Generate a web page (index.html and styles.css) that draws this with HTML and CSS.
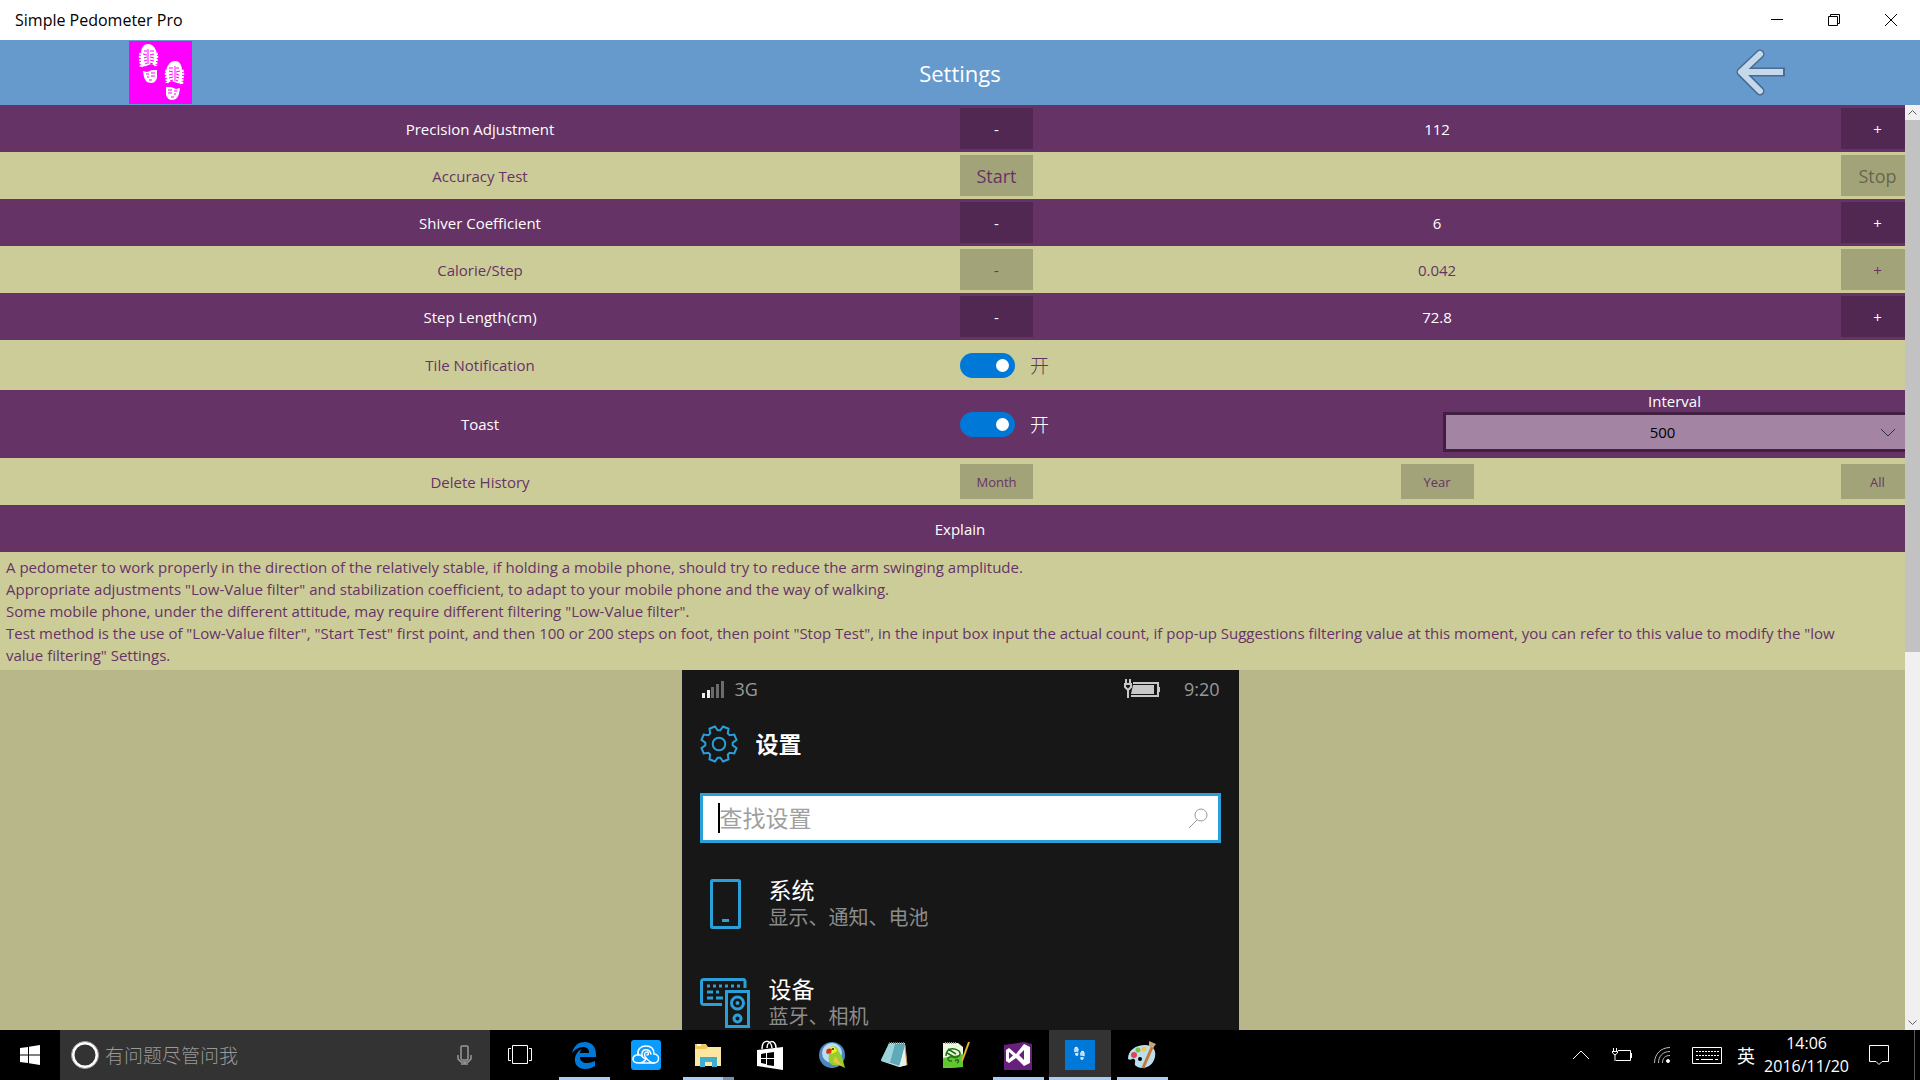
FILE: index.html
```html
<!DOCTYPE html>
<html lang="en">
  <head>
    <meta charset="UTF-8" />
    <meta name="viewport" content="width=device-width, initial-scale=1.0" />
    <title>Simple Pedometer Pro</title>
    <link rel="stylesheet" href="styles.css">
  </head>
  <body>
    <!-- shared footprint shape -->
    <svg class="defs" aria-hidden="true">
      <symbol id="steps" viewBox="0 0 63 63">
        <g id="foot">
          <path d="M12 13 C12 6 15 3 19 3 C24 3 27 7 28 14 C28 19 26 22 27 25 L22 23 L17 25 L12 26 C13 21 11 18 12 13Z" fill="currentColor" />
          <path d="M12 12 C10 17 13 21 12 26 M27 12 C29 17 26 21 27 25" fill="none" stroke="currentColor" stroke-width="3" stroke-dasharray="2 1" />
          <path class="tread" d="M15 10 H18 M21 10 H25 M14 13 L18 14 M21 14 L25 13 M15 17 L18 16 M21 16 L25 17 M15 20 L18 19 M21 19 L25 20 M16 23 L18 22 M21 22 L24 23 M19 8 V23" fill="none" />
          <path d="M14 30 L18 31 L23 29 L28 29 L28 37 C27 40 25 42 22 42 C18 42 16 39 15 36Z" fill="currentColor" />
          <path class="tread" d="M17 33 H20 M22 32 H26 M18 36 H20 M22 35 H26 M20 39 H23" fill="none" />
        </g>
        <use href="#foot" transform="translate(65 17) scale(-1 1)" />
      </symbol>
    </svg>

    <div class="titlebar">
      <span class="titlebar-text">Simple Pedometer Pro</span>
      <div class="window-buttons">
        <button aria-label="Minimize"><svg width="12" height="12" viewBox="0 0 12 12"><path d="M0 5.5H12" /></svg></button>
        <button aria-label="Restore"><svg width="12" height="12" viewBox="0 0 12 12"><path d="M.5 2.5H9.5V11.5H.5Z M2.5 2.5V.5H11.5V9.5H9.5" /></svg></button>
        <button aria-label="Close"><svg width="12" height="12" viewBox="0 0 12 12"><path d="M0 0L12 12M12 0L0 12" /></svg></button>
      </div>
    </div>

    <header>
      <svg class="logo" viewBox="0 0 63 63"><use href="#steps" /></svg>
      <h1>Settings</h1>
      <button class="back" aria-label="Back">
        <svg width="52" height="48" viewBox="0 0 52 48">
          <g fill="none" stroke-linejoin="round">
            <path d="M26 5L7 23L26 42" stroke="#486b90" stroke-width="9" stroke-linecap="round" />
            <path d="M8 23H51" stroke="#486b90" stroke-width="9" />
            <path d="M26 5L7 23L26 42" stroke="#c6d8eb" stroke-width="6" stroke-linecap="round" />
            <path d="M8 23H49" stroke="#c6d8eb" stroke-width="6" />
          </g>
        </svg>
      </button>
    </header>

    <main>
      <section class="row dark">
        <span class="row-label">Precision Adjustment</span>
        <div class="controls">
          <button aria-label="Decrease precision">-</button>
          <output>112</output>
          <button aria-label="Increase precision">+</button>
        </div>
      </section>
      <section class="row">
        <span class="row-label">Accuracy Test</span>
        <div class="controls">
          <button class="large">Start</button>
          <button class="large" disabled>Stop</button>
        </div>
      </section>
      <section class="row dark">
        <span class="row-label">Shiver Coefficient</span>
        <div class="controls">
          <button aria-label="Decrease shiver coefficient">-</button>
          <output>6</output>
          <button aria-label="Increase shiver coefficient">+</button>
        </div>
      </section>
      <section class="row">
        <span class="row-label">Calorie/Step</span>
        <div class="controls">
          <button aria-label="Decrease calorie per step">-</button>
          <output>0.042</output>
          <button aria-label="Increase calorie per step">+</button>
        </div>
      </section>
      <section class="row dark">
        <span class="row-label">Step Length(cm)</span>
        <div class="controls">
          <button aria-label="Decrease step length">-</button>
          <output>72.8</output>
          <button aria-label="Increase step length">+</button>
        </div>
      </section>
      <section class="row tile">
        <label class="row-label" for="tile">Tile Notification</label>
        <div class="controls">
          <div class="toggle"><input type="checkbox" id="tile" checked /><span>开</span></div>
        </div>
      </section>
      <section class="row dark toast">
        <label class="row-label" for="toast">Toast</label>
        <div class="controls">
          <div class="toggle"><input type="checkbox" id="toast" checked /><span>开</span></div>
          <div class="interval">
            <label for="interval">Interval</label>
            <div class="select-box">
              <select id="interval"><option>500</option></select>
              <svg width="16" height="9" viewBox="0 0 16 9"><path d="M1 1L8 8L15 1" /></svg>
            </div>
          </div>
        </div>
      </section>
      <section class="row history">
        <span class="row-label">Delete History</span>
        <div class="controls">
          <button>Month</button>
          <button>Year</button>
          <button>All</button>
        </div>
      </section>
      <h2 class="row dark">Explain</h2>
      <div class="explain">
        <p>A pedometer to work properly in the direction of the relatively stable, if holding a mobile phone, should try to reduce the arm swinging amplitude.</p>
        <p>Appropriate adjustments "Low-Value filter" and stabilization coefficient, to adapt to your mobile phone and the way of walking.</p>
        <p>Some mobile phone, under the different attitude, may require different filtering "Low-Value filter".</p>
        <p>Test method is the use of "Low-Value filter", "Start Test" first point, and then 100 or 200 steps on foot, then point "Stop Test", in the input box input the actual count, if pop-up Suggestions filtering value at this moment, you can refer to this value to modify the "low value filtering" Settings.</p>
      </div>

      <div class="guide">
        <div class="phone">
          <div class="phone-status">
            <svg width="22" height="17" viewBox="0 0 22 17">
              <path d="M0 12h3v5H0z M5 9h3v8H5z" fill="#eee" />
              <path d="M9 6h3v11H9z M14 3h3v14h-3z M19 0h3v17h-3z" fill="#6b6b6b" />
            </svg>
            <span class="network">3G</span>
            <svg width="36" height="20" viewBox="0 0 36 20">
              <path d="M9 4H34V17H7" fill="none" stroke="#c8c8c8" stroke-width="2" />
              <path d="M9 6H30V15H7Z M34 8h2v5h-2z" fill="#c8c8c8" />
              <path d="M2 0V4M6 0V4M0 5H8M1 5V8L4 11L7 8V5M4 11V19" fill="none" stroke="#c8c8c8" stroke-width="2" />
            </svg>
            <span class="phone-time">9:20</span>
          </div>
          <div class="phone-title">
            <svg width="38" height="38" viewBox="-19 -19 38 38">
              <path d="M-4.1 -17.5L-9.5 -15.3L-8.8 -10.6L-10.6 -8.8L-15.3 -9.5L-17.5 -4.1L-13.7 -1.3V1.3L-17.5 4.1L-15.3 9.5L-10.6 8.8L-8.8 10.6L-9.5 15.3L-4.1 17.5L-1.3 13.7H1.3L4.1 17.5L9.5 15.3L8.8 10.6L10.6 8.8L15.3 9.5L17.5 4.1L13.7 1.3V-1.3L17.5 -4.1L15.3 -9.5L10.6 -8.8L8.8 -10.6L9.5 -15.3L4.1 -17.5L1.3 -13.7H-1.3Z" />
              <circle r="6.3" />
            </svg>
            <strong>设置</strong>
          </div>
          <div class="phone-search">
            <span class="caret"></span>
            <input type="text" aria-label="查找设置" placeholder="查找设置" />
            <svg width="20" height="21" viewBox="0 0 20 21"><circle cx="13" cy="7" r="6" /><path d="M9 12L1 20" /></svg>
          </div>
          <div class="phone-item">
            <svg width="50" height="50" viewBox="0 0 50 50">
              <rect x="11.5" y="1.5" width="28" height="47" rx="1" fill="none" stroke="#2a9fd8" stroke-width="3" />
              <path d="M22 40h7v3h-7z" fill="#2a9fd8" />
            </svg>
            <div>
              <p class="item-name">系统</p>
              <p class="item-text">显示、通知、电池</p>
            </div>
          </div>
          <div class="phone-item">
            <svg width="50" height="50" viewBox="0 0 50 50" fill="none" stroke="#2a9fd8" stroke-width="3">
              <path d="M45 10V3C45 2 44 1.5 44 1.5H4C2 1.5 1.5 2 1.5 4V24C1.5 26 2 26.5 4 26.5H22" />
              <path d="M7 8H43" stroke-dasharray="3 3" />
              <path d="M7 14H13M16 14H19M7 20H13M16 20H23" />
              <rect x="26.5" y="13.5" width="22" height="35" />
              <circle cx="37.5" cy="25" r="6" />
              <circle cx="37.5" cy="25" r="1" stroke-width="2" />
              <circle cx="37.5" cy="40.5" r="3.5" />
            </svg>
            <div>
              <p class="item-name">设备</p>
              <p class="item-text">蓝牙、相机</p>
            </div>
          </div>
        </div>
      </div>

      <div class="scrollbar">
        <svg width="15" height="15" viewBox="0 0 15 15"><path d="M3.5 9.5L7.5 5.5L11.5 9.5" /></svg>
        <div class="thumb"></div>
        <svg width="15" height="15" viewBox="0 0 15 15"><path d="M3.5 5.5L7.5 9.5L11.5 5.5" /></svg>
      </div>
    </main>

    <footer class="taskbar">
      <button class="start" aria-label="Start">
        <svg width="20" height="20" viewBox="0 0 20 20" fill="#fff"><path d="M0 3L8 2V9.5H0Z M9 1.8L20 0V9.5H9Z M0 10.5H8V18L0 17Z M9 10.5H20V20L9 18.2Z" /></svg>
      </button>
      <div class="cortana">
        <svg width="28" height="28" viewBox="0 0 28 28"><circle cx="14" cy="14" r="12" fill="none" stroke="#fff" stroke-width="3" /><circle cx="14" cy="14" r="13.5" fill="none" stroke="#999" /></svg>
        <input type="text" aria-label="有问题尽管问我" placeholder="有问题尽管问我" />
        <svg width="15" height="20" viewBox="0 0 15 20" fill="none" stroke="#999" stroke-width="1.5"><rect x="4" y="1" width="7" height="14" rx="1" /><path d="M1 10V14L4 17H11L14 14V10M7.5 17V19M4 19H11" /></svg>
      </div>
      <button class="taskview" aria-label="Task view">
        <svg width="24" height="20" viewBox="0 0 24 20" fill="none" stroke="#fff"><path d="M4.5 .5H19.5V18.5H4.5Z M3 3.5H.5V15.5H3 M21 3.5H23.5V15.5H21" /></svg>
      </button>
      <nav class="apps">
        <button class="open" aria-label="Edge">
          <svg width="26" height="28" viewBox="0 0 26 28"><path d="M1 12C3 4 8 1 14 1C21 1 25 6 25 13V16H9C9 20 12 22 16 22C19 22 21 21 24 20V25C21 27 18 28 14 28C7 28 3 23 4 17C5 12 8 9 11 8C9 10 9 11 9 12H18C18 8 16 6 12 6C8 6 4 8 1 12Z" fill="#0078d7" /></svg>
        </button>
        <button aria-label="Cloud">
          <svg width="30" height="30" viewBox="0 0 30 30"><rect width="30" height="30" rx="3" fill="#0a9bff" /><g fill="none" stroke="#fff" stroke-width="1.5" stroke-linecap="round"><path d="M7 15C6 9 10 6 15 6C20 6 23 9 23 14C29 14 29 23 23 23C19 23 17 20 15 18C12 15 14 12 16 12C18 12 18 15 16 15" /><path d="M20 14C19 9 12 8 11 13C10 17 13 19 15 18" /><path d="M11 16C6 13 2 16 2 19C2 22 5 23 8 23H23M15 19C13 22 11 23 8 23" /></g></svg>
        </button>
        <button class="open multi" aria-label="File Explorer">
          <svg width="28" height="28" viewBox="0 0 28 28"><path d="M1 3H12L14 6H27V25H1Z" fill="#f1c65c" /><path d="M1 8H12L14 6H27V25H1Z" fill="#fde7a0" /><path d="M3 4H7" stroke="#fff" stroke-width="2" /><path d="M6 26V16H23V26H18V21H11V26Z" fill="#3daed1" /></svg>
        </button>
        <button aria-label="Store">
          <svg width="26" height="30" viewBox="0 0 26 30"><path d="M5 9C5 -1 14 -1 15 8M10 8C10 0 19 -1 19 8" fill="none" stroke="#fff" stroke-width="1.5" /><path d="M0 10L26 7V30L0 26Z" fill="#fff" /><path d="M4 14L9 13V18H4Z M10 13L17 12V18H10Z M4 19H9V24L4 23Z M10 19H17V26L10 25Z" fill="#000" /></svg>
        </button>
        <button aria-label="Parrot">
          <svg width="28" height="28" viewBox="0 0 28 28"><circle cx="14" cy="14" r="13" fill="#4c86bf" /><circle cx="14" cy="12" r="10" fill="#b9ddf1" /><path d="M10 9C12 4 19 4 20 9L24 16L27 27L21 24C14 26 9 22 11 14Z" fill="#91cf2b" /><path d="M10 8C13 4 18 5 19 10L14 13Z" fill="#f3ee35" /><path d="M14 8C9 6 7 10 9 13L13 12Z" fill="#e42920" /><path d="M17 15L24 25L15 21Z" fill="#f0c040" /><circle cx="15" cy="8" r="1" fill="#222" /></svg>
        </button>
        <button aria-label="Notepad">
          <svg width="28" height="28" viewBox="0 0 28 28"><path d="M9 2H25L27 24L19 26L1 20Z" fill="#cde4e7" /><path d="M9 3L25 3L20 25L1 19Z" fill="#60a9b6" /><path d="M9 3L15 3L10 22L1 19Z" fill="#9bd4da" /><path d="M25 5L27 24L19 26Z" fill="#e8f1ee" /><path d="M9 2H25" stroke="#777" stroke-width="2" stroke-dasharray="1 1" /><path d="M25 4L27 24" stroke="#b88a42" /></svg>
        </button>
        <button aria-label="Text editor">
          <svg width="28" height="28" viewBox="0 0 28 28"><path d="M1 2H16L21 6V26L1 27Z" fill="#edf7de" /><path d="M1 17L21 13V26L1 27Z" fill="#60c631" /><path d="M4 15C4 7 12 6 17 10C20 14 16 17 11 16C4 15 5 20 10 20M5 12L14 17M6 8L14 13M13 20C16 17 18 20 15 22" fill="none" stroke="#246d18" stroke-width="1.5" /><path d="M27 1L20 20" stroke="#e8b331" stroke-width="2" /><path d="M3 2H14" stroke="#999" stroke-dasharray="1 1" stroke-width="2" /></svg>
        </button>
        <button class="open" aria-label="Visual Studio">
          <svg width="28" height="30" viewBox="0 0 28 30"><path d="M0 5L20 2L28 4V30H0Z" fill="#68217a" /><path d="M2 10L5 8L12 14L20 4L26 7V23L20 26L12 18L5 23L2 21Z" fill="#fff" /><path d="M5 12V19L9 15.5Z M20 10V20L15 15Z" fill="#68217a" /></svg>
        </button>
        <button class="open active" aria-label="Simple Pedometer Pro">
          <svg class="app-tile" width="30" height="30" viewBox="-32 -20 126 126"><use href="#steps" width="63" height="63" transform="translate(-4 5)" /></svg>
        </button>
        <button class="open" aria-label="Paint">
          <svg width="30" height="28" viewBox="0 0 30 28"><path d="M1 18C1 9 9 4 18 4C28 4 30 12 27 19C24 27 14 29 9 25C6 23 10 20 7 18C5 17 4 20 1 18Z" fill="#bcdff0" /><circle cx="7" cy="14" r="3" fill="#dc4654" /><circle cx="11" cy="9" r="2.5" fill="#7ac143" /><circle cx="17" cy="8" r="2.5" fill="#efc845" /><circle cx="13" cy="18" r="2" fill="#000" /><path d="M26 4L16 27" stroke="#c47a38" stroke-width="3" /><path d="M22 0L29 3L26 7L22 5Z" fill="#c9a574" /></svg>
        </button>
      </nav>
      <div class="tray">
        <svg width="18" height="10" viewBox="0 0 18 10"><path d="M1 9L9 1L17 9" /></svg>
        <svg width="20" height="14" viewBox="0 0 20 14"><path d="M6 2.5H18.5V12.5H4 M19.5 5V10 M1.5 0V3 M4.5 0V3 M0 3.5H6 M.5 3V5L3 7L5.5 5V3 M3 7V13" /></svg>
        <svg width="16" height="16" viewBox="0 0 16 16"><path d="M.5 16C.5 7 7 .5 16 .5M4.5 16C4.5 9 9 4.5 16 4.5M8.5 16C8.5 11 11 8.5 16 8.5" stroke="#bbb" /><circle cx="14" cy="14" r="1.5" fill="#fff" /></svg>
        <svg width="30" height="17" viewBox="0 0 30 17"><path d="M.5 .5H29.5V16.5H.5Z" /><path d="M4 4.5H27M4 8.5H27" stroke-dasharray="2 1" /><path d="M4 12.5H7M9 12.5H21M23 12.5H26" /></svg>
        <span class="ime">英</span>
        <div class="clock"><time>14:06</time><span>2016/11/20</span></div>
        <svg width="20" height="20" viewBox="0 0 20 20"><path d="M.5 .5H19.5V16.5H13L10 19.5L7 16.5H.5Z" /></svg>
      </div>
      <span class="show-desktop"></span>
    </footer>
  </body>
</html>
```
FILE: styles.css
```css
:root {
  --purple: #663366;
  --beige: #cccc99;
  --blue: #6699cc;
  --accent: #0078d7;
  --phone-blue: #2a9fd8;
}

* {
  margin: 0;
  padding: 0;
  box-sizing: border-box;
}

body {
  height: 100vh;
  display: flex;
  flex-direction: column;
  overflow: hidden;
  background-color: #b8b78a;
  font-family: "Open Sans", "Noto Sans CJK SC", sans-serif;
  font-size: 15px;
  line-height: 22px;
}

button,
input,
select {
  font: inherit;
  color: inherit;
  border: none;
  background: none;
}

svg {
  display: block;
  flex: none;
}

.defs {
  position: absolute;
  width: 0;
  height: 0;
}

.tread {
  stroke: var(--tread, #ff00ff);
}

/* window frame */
.titlebar {
  height: 40px;
  flex: none;
  display: flex;
  align-items: center;
  justify-content: space-between;
  padding: 0 1px 0 15px;
  background-color: #fff;
  color: #000;
}

.titlebar-text {
  font-size: 16px;
}

.window-buttons {
  display: flex;
  height: 100%;
}

.window-buttons button {
  width: 57px;
  display: grid;
  place-items: center;
}

.window-buttons path {
  fill: none;
  stroke: #000;
}

header {
  height: 65px;
  flex: none;
  display: grid;
  grid-template-columns: 1fr 4fr 1fr;
  place-items: center;
  background-color: var(--blue);
  color: #fff;
}

.logo {
  width: 63px;
  height: 63px;
  background-color: #ff00ff;
}

h1 {
  font-size: 22px;
  font-weight: 400;
  line-height: 30px;
}

/* settings rows */
main {
  position: relative;
  flex: 1;
  min-height: 0;
  overflow: hidden;
}

.row {
  min-height: 47px;
  display: flex;
  align-items: center;
  background-color: var(--beige);
  color: var(--purple);
}

.dark {
  background-color: var(--purple);
  color: #fff;
}

.row-label {
  width: 50%;
  text-align: center;
}

.controls {
  flex: 1;
  display: flex;
  align-items: center;
  justify-content: space-between;
  padding-right: 6px;
}

.controls button {
  width: 73px;
  height: 41px;
  background-color: rgba(0, 0, 0, 0.2);
}

.controls .large {
  font-size: 18px;
}

.controls button:disabled {
  color: rgba(0, 0, 0, 0.4);
}

.tile {
  min-height: 50px;
}

.toast {
  height: 68px;
}

.toggle {
  display: flex;
  align-items: center;
  gap: 15px;
  font-size: 19px;
}

.toggle span {
  font-family: "Noto Sans CJK SC", sans-serif;
  font-weight: 300;
}

.toggle input {
  appearance: none;
  width: 55px;
  height: 25px;
  padding: 6px;
  border-radius: 13px;
  background-color: #999;
}

.toggle input:checked {
  background-color: var(--accent);
}

.toggle input::before {
  content: "";
  display: block;
  width: 13px;
  height: 13px;
  border-radius: 50%;
  background-color: #fff;
}

.toggle input:checked::before {
  margin-left: auto;
}

.interval {
  width: calc(50% - 6px);
  padding-bottom: 6px;
  text-align: center;
}

.interval label {
  display: block;
  padding-right: 8px;
}

.select-box {
  position: relative;
}

.select-box select {
  appearance: none;
  display: block;
  width: 100%;
  height: 40px;
  padding-right: 32px;
  border: 3px solid #401f40;
  background-color: rgba(255, 255, 255, 0.4);
  color: #000;
  text-align: center;
  text-align-last: center;
}

.select-box svg {
  position: absolute;
  right: 18px;
  top: 16px;
  fill: none;
  stroke: #333;
}

.history button {
  height: 35px;
  font-size: 13px;
}

h2.row {
  justify-content: center;
  font-size: 15px;
  font-weight: 400;
}

.explain {
  padding: 4px 48px 4px 6px;
  background-color: var(--beige);
  color: var(--purple);
}

/* phone screen */
.guide {
  display: flex;
  justify-content: center;
}

.phone {
  width: 557px;
  padding: 8px 18px;
  background-color: #171717;
  color: #fff;
}

.phone-status {
  display: flex;
  align-items: center;
  height: 22px;
  padding: 0 1px 0 2px;
  color: #999;
  font-size: 18px;
}

.network {
  margin-left: 11px;
  margin-right: auto;
}

.phone-time {
  margin-left: 24px;
}

.phone-title {
  display: flex;
  align-items: center;
  gap: 18px;
  margin: 25px 0 30px;
  font-size: 23px;
}

.phone-title svg {
  fill: none;
  stroke: var(--phone-blue);
  stroke-width: 2;
}

.phone-search {
  display: flex;
  align-items: center;
  height: 50px;
  padding: 0 10px 0 15px;
  border: 3px solid var(--phone-blue);
  background-color: #fff;
}

.caret {
  width: 2px;
  height: 30px;
  background-color: #000;
}

.phone-search input {
  flex: 1;
  min-width: 0;
  font-size: 23px;
  line-height: 32px;
  outline: none;
}

.phone-search input::placeholder {
  color: #a0a0a0;
}

.phone-search svg {
  fill: none;
  stroke: #999;
}

.phone-item {
  display: flex;
  align-items: center;
  gap: 19px;
  padding: 33px 0 10px;
}

.item-name {
  font-size: 23px;
  line-height: 28px;
}

.item-text {
  color: #8c8c8c;
  font-size: 20px;
  line-height: 28px;
}

/* lies over the right edge of the page */
.scrollbar {
  position: absolute;
  top: 0;
  right: 0;
  bottom: 0;
  width: 15px;
  display: flex;
  flex-direction: column;
  background-color: #f0f0f0;
}

.scrollbar path {
  fill: none;
  stroke: #606060;
}

.thumb {
  height: 532px;
  margin-bottom: auto;
  background-color: #c2c2c2;
}

/* taskbar */
.taskbar {
  height: 50px;
  flex: none;
  display: flex;
  background-color: #000;
  color: #fff;
}

.taskbar button {
  display: grid;
  place-items: center;
}

.start,
.taskview {
  width: 60px;
}

.cortana {
  width: 430px;
  display: flex;
  align-items: center;
  gap: 6px;
  padding: 0 18px 0 11px;
  background-color: #333;
}

.cortana input {
  flex: 1;
  min-width: 0;
  font-size: 19px;
  font-family: "Noto Sans CJK SC", sans-serif;
  font-weight: 300;
  line-height: 30px;
}

.cortana input::placeholder {
  color: #999;
}

.apps {
  display: flex;
  margin-left: 3px;
}

.apps button {
  position: relative;
  width: 62px;
}

.apps .open::after {
  content: "";
  position: absolute;
  left: 6px;
  right: 5px;
  bottom: 0;
  height: 3px;
  background-color: #a9cdf3;
}

.apps .multi::after {
  background: linear-gradient(to right, #a9cdf3 40px, #7892ae 40px);
}

.apps .active {
  background-color: #333;
}

.apps .active::after {
  left: 0;
  right: 0;
}

.app-tile {
  --tread: #0078d7;
  background-color: var(--accent);
}

.tray {
  display: flex;
  align-items: center;
  margin-left: auto;
  gap: 22px;
  padding-right: 25px;
}

.tray svg {
  fill: none;
  stroke: #fff;
}

.ime {
  margin: 0 -13px 0 -7px;
  font-size: 18px;
  font-family: "Noto Sans CJK SC", sans-serif;
}

.clock {
  display: flex;
  flex-direction: column;
  text-align: center;
  font-size: 16px;
  line-height: 23px;
  margin-right: -2px;
}

.show-desktop {
  width: 6px;
  border-left: 1px solid #555;
}
```
